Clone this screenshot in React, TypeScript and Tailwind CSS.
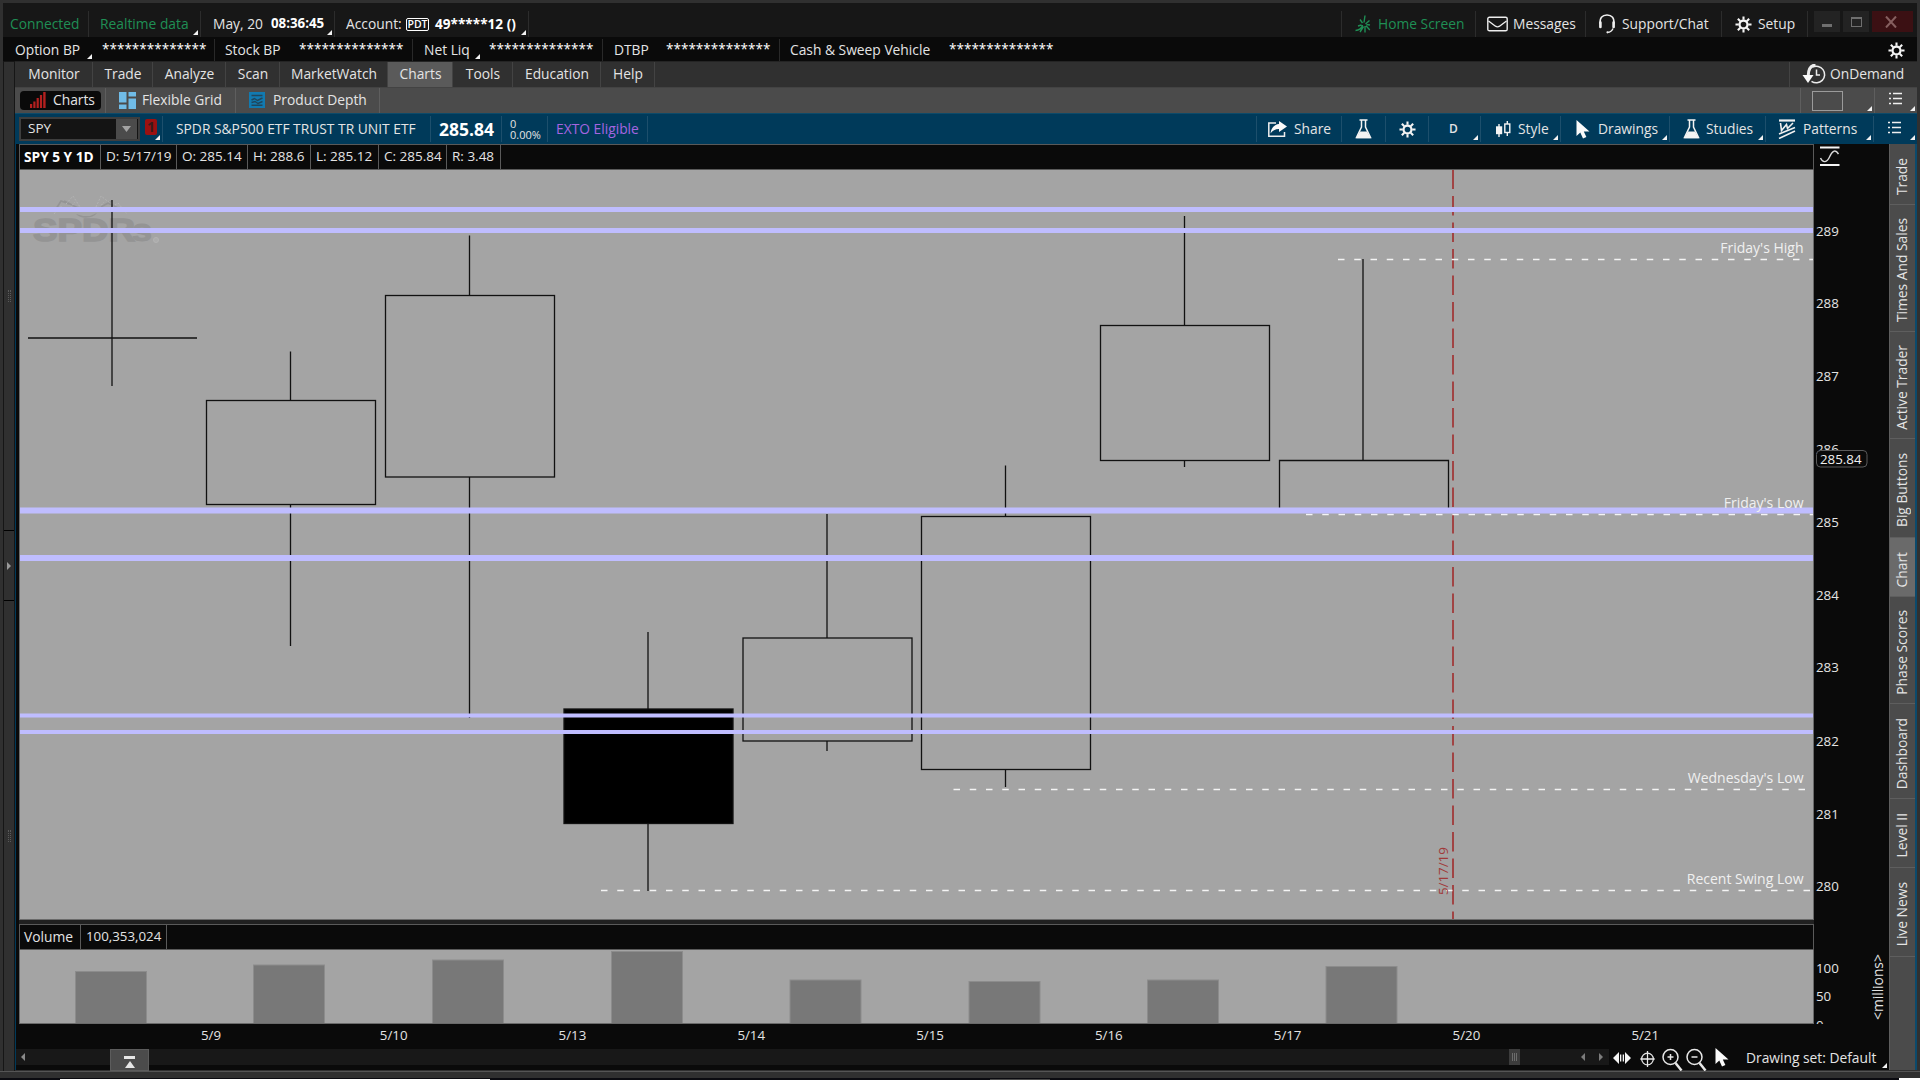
import { ReactNode } from "react";
import clsx from "clsx";

type Candle = {
  x: number;
  high: number;
  top: number;
  bottom: number;
  low: number;
  filled?: boolean;
};

const candles: Candle[] = [
  { x: 290.5, high: 351.5, top: 400.5, bottom: 504.5, low: 646 },
  { x: 469.5, high: 235.5, top: 295.5, bottom: 477, low: 718 },
  { x: 648, high: 632, top: 709, bottom: 823.5, low: 891, filled: true },
  { x: 827, high: 514, top: 638, bottom: 741, low: 751 },
  { x: 1005.5, high: 465.5, top: 516.5, bottom: 769.5, low: 787 },
  { x: 1184.5, high: 216, top: 325.5, bottom: 460.5, low: 467 },
];

// support / resistance bands: center and thickness
const bands = [
  { y: 209.5, h: 5 },
  { y: 230.5, h: 5 },
  { y: 510.5, h: 6 },
  { y: 558, h: 6 },
  { y: 715.5, h: 4 },
  { y: 732, h: 4 },
];

const levels = [
  { label: "Friday's High", x: 1338, y: 259.5 },
  { label: "Friday's Low", x: 1306, y: 514.5 },
  { label: "Wednesday's Low", x: 953.5, y: 789.5 },
  { label: "Recent Swing Low", x: 601, y: 890.5 },
];

const volumeBars = [
  { x: 75.5, y: 971.5 },
  { x: 253.5, y: 965 },
  { x: 432.5, y: 960 },
  { x: 611.5, y: 951.5 },
  { x: 790, y: 980 },
  { x: 969, y: 981.5 },
  { x: 1147.5, y: 980 },
  { x: 1326, y: 966.5 },
];

const prices = [
  { label: "289", y: 230.5 },
  { label: "288", y: 303 },
  { label: "287", y: 376 },
  { label: "286", y: 449 },
  { label: "285", y: 522 },
  { label: "284", y: 595 },
  { label: "283", y: 667.3 },
  { label: "282", y: 741 },
  { label: "281", y: 813.5 },
  { label: "280", y: 886 },
];

const menuTabs = [
  { label: "Monitor", width: "w-[78px]" },
  { label: "Trade", width: "w-[60px]" },
  { label: "Analyze", width: "w-[73px]" },
  { label: "Scan", width: "w-[54px]" },
  { label: "MarketWatch", width: "w-[108px]" },
  { label: "Charts", width: "w-[65px]", active: true },
  { label: "Tools", width: "w-[60px]" },
  { label: "Education", width: "w-[88px]" },
  { label: "Help", width: "w-[54px]" },
];

const ohlc = [
  { label: "D: 5/17/19", width: "w-[76px]" },
  { label: "O: 285.14", width: "w-[71px]" },
  { label: "H: 288.6", width: "w-[63px]" },
  { label: "L: 285.12", width: "w-[68px]" },
  { label: "C: 285.84", width: "w-[68px]" },
  { label: "R: 3.48", width: "w-[54px]" },
];

const sideTabs = [
  { label: "Trade", height: "h-[61px]" },
  { label: "Times And Sales", height: "h-[127px]" },
  { label: "Active Trader", height: "h-[107px]" },
  { label: "Big Buttons", height: "h-[99px]" },
  { label: "Chart", height: "h-[59px]", active: true },
  { label: "Phase Scores", height: "h-[107px]" },
  { label: "Dashboard", height: "h-[95px]" },
  { label: "Level II", height: "h-[69px]" },
  { label: "Live News", height: "h-[89px]" },
];

const dates = ["5/9", "5/10", "5/13", "5/14", "5/15", "5/16", "5/17", "5/20", "5/21"];

function Corner() {
  return (
    <svg className="absolute right-0.5 bottom-0.5" width="5" height="5" viewBox="0 0 5 5">
      <path d="M5 0V5H0Z" fill="#f2f2f2" />
    </svg>
  );
}

function Cell({ className, menu, children }: { className?: string; menu?: boolean; children?: ReactNode }) {
  return (
    <div className={clsx("relative flex shrink-0 items-center border-r", className)}>
      {children}
      {menu && <Corner />}
    </div>
  );
}

function Gear({ size = 17 }: { size?: number }) {
  return (
    <svg width={size} height={size} viewBox="0 0 18 18" fill="none" stroke="#f4f4f4">
      <circle cx="9" cy="9" r="4.2" strokeWidth="2.4" />
      <path
        d="M9 0.5V4M9 14V17.5M0.5 9H4M14 9H17.5M3 3L5.6 5.6M12.4 12.4L15 15M15 3L12.4 5.6M5.6 12.4L3 15"
        strokeWidth="2.2"
      />
    </svg>
  );
}

function Flask() {
  return (
    <svg width="17" height="20" viewBox="0 0 17 20">
      <path d="M4.5 1H12.5M6.5 1V8L1.5 18.5H15.5L10.5 8V1" fill="none" stroke="#f4f4f4" strokeWidth="1.5" />
      <path d="M5 12.5H12L15.8 19.3H1.2Z" fill="#f4f4f4" />
    </svg>
  );
}

function Cursor() {
  return (
    <svg width="14" height="19" viewBox="0 0 14 19">
      <path d="M0.5 0V16L4.3 12.6L7 18.5L10.4 17L7.8 11.4H13.5Z" fill="#fafafa" />
    </svg>
  );
}

function ListIcon() {
  return (
    <svg width="13" height="13" viewBox="0 0 13 13" stroke="#f0f0f0" strokeWidth="1.4">
      <path d="M0 1.5H2M4 1.5H13M0 6.5H2M4 6.5H13M0 11.5H2M4 11.5H13" />
    </svg>
  );
}

function TitleBar() {
  return (
    <div className="flex h-[34px] bg-[#171717] pt-2">
      <Cell className="w-[86px] border-[#2c2c2c] pl-[7px] text-[#1f8f55]">Connected</Cell>
      <Cell className="w-[112px] border-[#2c2c2c] pl-[11px] text-[#1f8f55]" menu>
        Realtime data
      </Cell>
      <Cell className="w-[134px] border-[#2c2c2c] pl-3" menu>
        <span className="w-[58px]">May, 20</span>
        <span className="text-[13.3px] font-bold text-white">08:36:45</span>
      </Cell>
      <Cell className="w-[194px] border-[#2c2c2c] pl-[11px]" menu>
        <span className="w-[60px]">Account:</span>
        <span className="mr-1.5 flex h-[13px] w-[23px] items-center justify-center rounded-xs border border-white text-[10.5px] font-semibold text-white">
          PDT
        </span>
        <span className="text-[13.6px] font-bold text-white">49*****12 ()</span>
      </Cell>
      <Cell className="grow border-[#2c2c2c]" />
      <Cell className="w-[134px] gap-[7px] border-[#2c2c2c] pl-[13px] text-[#1f8f55]">
        <svg width="16" height="18" viewBox="0 0 16 18" fill="none" stroke="#1f8f55" strokeWidth="1.4">
          <path d="M10 0.5L9 7.500M5 4.500L7.500 8M14.500 5.500L10.500 9M0.500 15.500C4 15.500 7 13 7.500 10M5 17L8.500 11.500M10 11V17.500M11 10.800L14.800 15M11.500 9.500L15 10M3 11L6.500 10" />
        </svg>
        Home Screen
      </Cell>
      <Cell className="w-[110px] gap-[5px] border-[#2c2c2c] pl-[11px]">
        <svg width="21" height="16" viewBox="0 0 21 16" fill="none" stroke="#eeeeee" strokeWidth="1.4">
          <rect x="0.8" y="1.2" width="19.4" height="13.6" rx="1.6" />
          <path d="M1.5 5L8.5 10.2C9.8 11.1 11.2 11.1 12.5 10.2L19.5 5" />
        </svg>
        Messages
      </Cell>
      <Cell className="w-[136px] gap-[6px] border-[#2c2c2c] pl-3">
        <svg width="18" height="20" viewBox="0 0 18 20" fill="none" stroke="#f0f0f0">
          <path d="M2.3 10C1.2 4 4.2 1 9 1S16.8 4 15.7 10" strokeWidth="1.5" />
          <path d="M2.4 8.500V13M15.600 8.500V13" strokeWidth="2.600" strokeLinecap="round" />
          <path d="M15 14.5C14 17 12.5 18.2 9.5 18.4" strokeWidth="1.4" />
          <circle cx="9.5" cy="18.3" r="1.1" fill="#f0f0f0" stroke="none" />
        </svg>
        Support/Chat
      </Cell>
      <Cell className="w-[86px] gap-[6px] border-[#2c2c2c] pl-[13px]">
        <Gear />
        Setup
      </Cell>
      <div className="ml-1.5 flex h-[21px] w-[103px] gap-[3px]">
        <div className="flex w-[26px] items-end justify-center bg-[#232323] pb-[5px]">
          <div className="h-[3px] w-[10px] bg-[#6f6f6f]" />
        </div>
        <div className="flex w-[26px] items-center justify-center bg-[#232323]">
          <div className="h-[10px] w-[11px] border border-t-2 border-[#6f6f6f]" />
        </div>
        <div className="flex w-[41px] items-center justify-center bg-[#3b1013] pr-1">
          <svg width="12" height="12" viewBox="0 0 12 12" stroke="#865f5f" strokeWidth="2">
            <path d="M1 0.5L11 11.5M11 0.5L1 11.5" />
          </svg>
        </div>
      </div>
    </div>
  );
}

function BalanceBar() {
  const stars = <span className="text-[13.55px] text-white">**************</span>;
  return (
    <div className="flex h-6 bg-[#0a0a0a] pt-0.5">
      <Cell className="w-[212px] border-[#292929] pl-3">
        <span className="relative h-full w-[79px] leading-[22px]">
          Option BP
          <Corner />
        </span>
        <span className="w-2" />
        {stars}
      </Cell>
      <Cell className="w-[198px] border-[#292929] pl-2.5">
        <span className="w-[74px]">Stock BP</span>
        {stars}
      </Cell>
      <Cell className="w-[190px] border-[#292929] pl-[11px]">
        <span className="relative h-full w-[58px] leading-[22px]">
          Net Liq
          <Corner />
        </span>
        <span className="w-[7px]" />
        {stars}
      </Cell>
      <Cell className="w-[177px] border-[#292929] pl-[11px]">
        <span className="w-[52px]">DTBP</span>
        {stars}
      </Cell>
      <Cell className="grow border-transparent pl-2.5">
        <span className="w-[159px]">Cash &amp; Sweep Vehicle</span>
        {stars}
      </Cell>
      <div className="mr-3 flex items-center">
        <Gear />
      </div>
    </div>
  );
}

function MenuTabs() {
  return (
    <div className="flex h-[27px] border-t border-b border-t-[#242424] border-b-[#434343] bg-[#303030]">
      {menuTabs.map((tab) => (
        <Cell
          key={tab.label}
          className={clsx(tab.width, "justify-center border-[#434343] pb-0.5 pl-px", tab.active && "bg-[#5a5a5a]")}
        >
          {tab.label}
        </Cell>
      ))}
      <Cell className="grow border-[#434343]" />
      <div className="flex w-[127px] items-center gap-1 pb-0.5 pl-3">
        <svg width="24" height="20" viewBox="0 0 24 20" fill="none" stroke="#ececec">
          <path d="M9.5 17.3A8.3 8.3 0 1 0 10.5 3.2" strokeWidth="1.5" />
          <path d="M14.5 5.5V11H18" strokeWidth="1.5" />
          <path d="M13.5 1C8.5 1.3 6.3 5 6.2 12" strokeWidth="3" />
          <path d="M0.5 11H11.5L6 19Z" fill="#fafafa" stroke="none" />
        </svg>
        OnDemand
      </div>
    </div>
  );
}

function SubTabs() {
  return (
    <div className="flex h-[25px] bg-[#4b4b4b]">
      <Cell className="w-[91px] border-[#5e5e5e] pb-px pl-[5px]">
        <div className="flex h-[19px] w-[81px] items-center gap-[7px] rounded bg-[#0a0a0a] pl-2.5">
          <svg width="16" height="16" viewBox="0 0 16 16" fill="#b4201f">
            <path d="M0 12H2.2V16H0ZM3.3 9.5H5.5V16H3.3ZM6.6 6H8.8V16H6.6ZM9.9 3H12.1V16H9.9ZM13.2 0H15.6V16H13.2Z" />
          </svg>
          Charts
        </div>
      </Cell>
      <Cell className="w-[130px] gap-[6px] border-[#5e5e5e] pb-px pl-[13px]">
        <svg width="17" height="17" viewBox="0 0 17 17" fill="#70bce8">
          <path d="M0 0H7.5V10.5H0ZM9.5 0H17V4.5H9.5ZM9.5 6.5H17V17H9.5ZM0 12.5H7.5V17H0Z" />
        </svg>
        Flexible Grid
      </Cell>
      <Cell className="w-[144px] gap-2 border-[#5e5e5e] pb-px pl-[13px]">
        <svg width="16" height="16" viewBox="0 0 16 16" fill="none">
          <rect width="16" height="16" fill="#127ab0" />
          <path d="M2.5 3.5H13.5M2.5 8L5.5 6.5L8.5 8.5L13.5 6M2.5 10.5L6 9.5L9 11.5L13.5 9.5M2.5 13.3H13.5" stroke="#20465c" strokeWidth="1.4" />
        </svg>
        Product Depth
      </Cell>
      <Cell className="grow border-[#5e5e5e]" />
      <Cell className="w-[74px] border-[#5e5e5e] pl-[11px]" menu>
        <div className="h-5 w-[31px] border border-[#9b9b9b]" />
      </Cell>
      <div className="relative flex w-[42px] items-center pb-1 pl-[14px]">
        <ListIcon />
        <Corner />
      </div>
    </div>
  );
}

function SymbolBar() {
  return (
    <div className="flex h-[31px] border-t border-[#0d4a69] bg-[#003a5a] py-0.5">
      <Cell className="w-[148px] border-[#1d4f6c] pl-1" menu>
        <div className="flex h-6 w-[121px] items-center border-2 border-[#3e3e3e] bg-[#141414] pl-[7px]">
          <span className="grow text-[13.5px]">SPY</span>
          <div className="mr-px flex h-5 w-[21px] items-center justify-center bg-[#4b4b4b]">
            <svg width="9" height="6" viewBox="0 0 9 6">
              <path d="M0 0H9L4.5 6Z" fill="#a3a3a3" />
            </svg>
          </div>
        </div>
        <div className="mb-1 ml-[5px] flex h-4 w-3 items-center justify-center rounded-xs bg-[#9a1111] text-[14px] font-bold text-[#3c1a1a]">
          1
        </div>
      </Cell>
      <Cell className="w-[268px] border-[#1d4f6c] pl-[13px]">SPDR S&amp;P500 ETF TRUST TR UNIT ETF</Cell>
      <Cell className="w-[71px] border-[#1d4f6c] pt-px pl-2 text-[17.5px] font-bold text-white">285.84</Cell>
      <Cell className="w-[46px] border-[#1d4f6c] pl-2">
        <div className="text-[11px] leading-[11px]">
          <div>0</div>
          <div>0.00%</div>
        </div>
      </Cell>
      <Cell className="w-[100px] border-[#1d4f6c] pl-2 text-[#a565e0]">EXTO Eligible</Cell>
      <Cell className="grow border-[#1d4f6c]" />
      <Cell className="w-[85px] gap-[7px] border-[#1d4f6c] pl-[11px]">
        <svg width="19" height="17" viewBox="0 0 19 17">
          <path d="M8 2H0.8V15.2H16.5V11" fill="none" stroke="#eeeeee" strokeWidth="1.5" />
          <path d="M11 0L19 5.5L11 11V8C7 8 4.5 9.5 2.5 12.5C3 7.5 6 3.5 11 3Z" fill="#fafafa" />
        </svg>
        Share
      </Cell>
      <Cell className="w-[44px] justify-center border-[#1d4f6c]">
        <Flask />
      </Cell>
      <Cell className="w-[43px] justify-center border-[#1d4f6c]">
        <Gear />
      </Cell>
      <Cell className="w-[52px] border-[#1d4f6c] pl-5 text-[12px] font-semibold" menu>
        D
      </Cell>
      <Cell className="w-20 gap-[7px] border-[#1d4f6c] pl-[15px]" menu>
        <svg width="15" height="17" viewBox="0 0 15 17" stroke="#f4f4f4" strokeWidth="1.4">
          <path d="M3 3V16" />
          <rect x="0.7" y="6" width="4.8" height="6.5" fill="#f4f4f4" />
          <path d="M11.3 0V3M11.3 11.5V15" />
          <rect x="8.8" y="3" width="5" height="8.5" fill="none" />
        </svg>
        Style
      </Cell>
      <Cell className="w-[109px] gap-2 border-[#1d4f6c] pl-[15px]" menu>
        <Cursor />
        Drawings
      </Cell>
      <Cell className="w-[96px] gap-[6px] border-[#1d4f6c] pl-[13px]" menu>
        <Flask />
        Studies
      </Cell>
      <Cell className="w-[108px] gap-[7px] border-[#1d4f6c] pl-3" menu>
        <svg width="18" height="20" viewBox="0 0 18 20" fill="none" stroke="#f0f0f0" strokeWidth="1.6">
          <path d="M1 1.5H17" strokeWidth="2.2" />
          <path d="M2.500 4L3.500 11.500L8.500 5.500L9.500 9.500L15 4" />
          <path d="M1 15L17 8.5M1 19.5L17 12" />
        </svg>
        Patterns
      </Cell>
      <div className="relative flex w-[43px] items-center pb-1 pl-[14px]">
        <ListIcon />
        <Corner />
      </div>
    </div>
  );
}

function PriceChart() {
  return (
    <svg width="1793" height="749" viewBox="20 170 1793 749" className="block bg-[#a4a4a4]">
      {/* fund logo watermark */}
      <g opacity="0.5">
        <path
          d="M56 209L61 201L69 204M64 201L80 209M97 209L112 201M108 203L120 209"
          fill="none"
          stroke="#858585"
          strokeWidth="1.6"
        />
        <path
          d="M54 214L60 206L66 210M66 204L73 196L80 207M70 208L75 202M96 207L101 196L110 203M99 208L104 202M112 207L118 203L127 214"
          fill="none"
          stroke="#c2c2c2"
          strokeWidth="1"
          strokeDasharray="2 1.5"
        />
        <path d="M76 214C80 219 93 219 97 213L90 216H83Z" fill="#858585" />
        <text x="33" y="241" textLength="102" lengthAdjust="spacingAndGlyphs" fontSize="32" fontWeight="bold" fontFamily="Liberation Sans, sans-serif" fill="#858585" stroke="#858585" strokeWidth="1.5">
          SPDR
        </text>
        <text x="132" y="241" textLength="20" lengthAdjust="spacingAndGlyphs" fontSize="32" fontWeight="bold" fontFamily="Liberation Sans, sans-serif" fill="#858585" stroke="#858585" strokeWidth="1">
          s
        </text>
        <circle cx="156" cy="240" r="2.5" fill="#b4b4b4" stroke="#c4c4c4" />
      </g>

      <g stroke="#111111" strokeWidth="1.3" fill="none">
        <path d="M112 200V386M28 338H197" />
        {candles.map((c) => (
          <g key={c.x}>
            <path d={`M${c.x} ${c.high}V${c.top}M${c.x} ${c.bottom}V${c.low}`} />
            <rect x={c.x - 84} y={c.top} width="169" height={c.bottom - c.top} fill={c.filled ? "#000000" : "none"} />
          </g>
        ))}
        <path d="M1363 259V460.5M1279.500 509V460.5H1448.500V509" />
      </g>

      <path d="M1453 169.5V919" stroke="#a03a3a" strokeWidth="1.8" strokeDasharray="19.5 7" />
      {levels.map((l) => (
        <path
          key={l.label}
          d={`M${l.x} ${l.y}H1813`}
          stroke="#f4f4f4"
          strokeWidth="1.6"
          strokeDasharray="6.5 9.75"
        />
      ))}
      {bands.map((b) => (
        <path key={b.y} d={`M20 ${b.y}H1813`} stroke="#bfbdff" strokeWidth={b.h} />
      ))}
      {levels.map((l) => (
        <text key={l.label} x="1803.500" y={l.y - 7} textAnchor="end" fontSize="14" fill="#f0f0f0">
          {l.label}
        </text>
      ))}
      <text transform="translate(1448 895) rotate(-90)" fontSize="13.3" fill="#a03a3a">
        5/17/19
      </text>
    </svg>
  );
}

function VolumeChart() {
  return (
    <svg width="1793" height="73" viewBox="20 950 1793 73" className="block bg-[#a4a4a4]">
      {volumeBars.map((bar) => (
        <rect
          key={bar.x}
          x={bar.x}
          y={bar.y}
          width="71"
          height={1024 - bar.y}
          fill="#787878"
          stroke="#8c8c8c"
          strokeWidth="1"
        />
      ))}
    </svg>
  );
}

function PriceAxis() {
  return (
    <svg width="75" height="880" viewBox="1814 144 75 880" className="block" fill="#e4e4e4" fontSize="13.3">
      <path d="M1820 147.5H1839.5M1820 165H1839.5" stroke="#f4f4f4" strokeWidth="2" />
      <path d="M1820.5 158C1823 163.5 1827 162.5 1829.5 157S1835 148.5 1838.5 154" fill="none" stroke="#d8d8d8" strokeWidth="1.4" />
      {prices.map((p) => (
        <text key={p.label} x="1816" y={p.y + 5}>
          {p.label}
        </text>
      ))}
      <rect x="1816.5" y="450.5" width="50.5" height="16.5" rx="4" fill="#0a0a0a" stroke="#5a5a5a" />
      <text x="1820" y="463.5" fill="#f0f0f0">
        285.84
      </text>
      <text x="1816" y="972.5">100</text>
      <text x="1816" y="1001">50</text>
      <text x="1816" y="1029.5">0</text>
      <text transform="translate(1882.5 1020) rotate(-90)" fontSize="13.8">
        &lt;millions&gt;
      </text>
    </svg>
  );
}

function ChartFooter() {
  return (
    <div className="flex h-[21px]">
      <div className="flex h-4 w-[1593px] items-center bg-[#181818] pl-[5px]">
        <svg width="4" height="8" viewBox="0 0 4 8">
          <path d="M4 0V8L0 4Z" fill="#8a8a8a" />
        </svg>
        <div className="ml-[85px] flex h-[22px] w-[39px] flex-col items-center gap-0.5 self-start border border-[#5c5c5c] bg-[#4b4b4b] pt-1.5">
          <div className="h-[3px] w-[11px] shrink-0 bg-[#e6e6e6]" />
          <svg className="shrink-0" width="10" height="7" viewBox="0 0 10 7">
            <path d="M5 0L10 7H0Z" fill="#e6e6e6" />
          </svg>
        </div>
        <div className="grow" />
        <div className="flex h-4 w-[11px] items-center justify-center gap-px bg-[#3c3c3c]">
          <div className="h-2 w-px bg-[#6c6c6c]" />
          <div className="h-2 w-px bg-[#6c6c6c]" />
          <div className="h-2 w-px bg-[#6c6c6c]" />
        </div>
        <svg className="mr-[6px] ml-[61px]" width="22" height="8" viewBox="0 0 22 8" fill="#7c7c7c">
          <path d="M4 0V8L0 4ZM18 0V8L22 4Z" />
        </svg>
      </div>
      <div className="flex h-[17px] items-center">
        <svg className="ml-1" width="18" height="12" viewBox="0 0 18 14" preserveAspectRatio="none" fill="#f4f4f4">
          <path d="M6 0V14L0 7ZM12 0V14L18 7ZM7 3H8.3V11H7ZM9.7 3H11V11H9.700Z" />
        </svg>
        <svg className="mt-0.5 ml-2" width="17" height="18" viewBox="0 0 17 20" fill="none" stroke="#e8e8e8" strokeWidth="1.4">
          <circle cx="8.5" cy="10" r="6.5" />
          <path d="M8.5 1V19M0.5 10H16.5" />
        </svg>
        <svg className="mt-1 ml-1.5" width="21" height="24" viewBox="0 0 21 24" fill="none" stroke="#e8e8e8" strokeWidth="1.5">
          <circle cx="8.5" cy="9" r="7.5" />
          <path d="M13.5 15L19.5 22.5" strokeWidth="2.5" />
          <path d="M5.5 9H11.5M8.5 6V12" />
        </svg>
        <svg className="mt-1 ml-[3px]" width="21" height="24" viewBox="0 0 21 24" fill="none" stroke="#e8e8e8" strokeWidth="1.5">
          <circle cx="8.5" cy="9" r="7.5" />
          <path d="M13.5 15L19.5 22.5" strokeWidth="2.5" />
          <path d="M5.5 9H11.5" />
        </svg>
        <div className="ml-2">
          <Cursor />
        </div>
      </div>
      <div className="relative flex grow items-center pb-1 pl-[17px]">
        Drawing set: Default
        <Corner />
      </div>
    </div>
  );
}

function SideTabs() {
  return (
    <div className="flex w-[26px] flex-col border-l border-[#5e5e5e] bg-[#4b4b4b] text-[13.8px]">
      {sideTabs.map((tab) => (
        <div
          key={tab.label}
          className={clsx(
            tab.height,
            "flex shrink-0 items-center justify-center border-b border-[#5e5e5e] pt-[5px] pr-0.5",
            tab.active && "bg-[#6a6a6a]"
          )}
        >
          <span className="rotate-180 leading-[20px] [writing-mode:vertical-rl]">{tab.label}</span>
        </div>
      ))}
    </div>
  );
}

function LeftRail() {
  return (
    <div className="flex w-3 flex-col border-x border-t border-[#161616] bg-[#303030]">
      <div className="flex h-[469px] items-center justify-center border-b border-black">
        <div className="h-3 w-[3px] border-x border-dotted border-[#5a5a5a]" />
      </div>
      <div className="flex h-[70px] items-center justify-center border-b border-black">
        <svg width="4" height="8" viewBox="0 0 4 8">
          <path d="M0 0L4 4L0 8Z" fill="#9a9a9a" />
        </svg>
      </div>
      <div className="flex grow items-center justify-center">
        <div className="h-3 w-[3px] border-x border-dotted border-[#5a5a5a]" />
      </div>
    </div>
  );
}

export default function App() {
  return (
    <div className="flex h-[1080px] w-[1920px] flex-col overflow-hidden bg-[#303030] pt-[3px] font-['Open_Sans','Noto_Sans',sans-serif] text-[13.8px] leading-none whitespace-nowrap text-[#e4e4e4]">
      <div className="mx-[3px]">
        <TitleBar />
        <BalanceBar />
      </div>
      <div className="mx-[3px] flex h-[1010px] shrink-0">
        <LeftRail />
        <div className="flex w-[1902px] flex-col">
          <MenuTabs />
          <SubTabs />
          <SymbolBar />
          <div className="flex h-[926px] border-l border-[#003a5a] bg-[#0a0a0a]">
            <div className="flex w-[1873px] flex-col">
              <div className="flex">
                <div className="ml-[3px] w-[1795px]">
                  <div className="flex h-[26px] border border-[#5a5a5a] bg-[#0a0a0a] text-[13.5px]">
                    <Cell className="w-[81px] border-[#5a5a5a] pl-1 text-[13.7px] font-bold text-white">SPY 5 Y 1D</Cell>
                    {ohlc.map((o) => (
                      <Cell key={o.label} className={clsx(o.width, "border-[#5a5a5a] pl-[5px]")}>
                        {o.label}
                      </Cell>
                    ))}
                  </div>
                  <div className="border-x border-b border-[#6a6a6a]">
                    <PriceChart />
                  </div>
                  <div className="h-1 bg-[#202020]" />
                  <div className="flex h-[26px] border border-[#5a5a5a] bg-[#0a0a0a]">
                    <Cell className="w-[61px] border-[#5a5a5a] pl-1">Volume</Cell>
                    <Cell className="w-[86px] border-[#5a5a5a] pl-[5px] text-[13.3px]">100,353,024</Cell>
                  </div>
                  <div className="border-x border-b border-[#6a6a6a]">
                    <VolumeChart />
                  </div>
                </div>
                <PriceAxis />
              </div>
              <div className="flex h-[25px] items-center pb-0.5 pl-[185px] text-[13.3px]">
                {dates.map((d) => (
                  <span key={d} className="w-[178.8px] shrink-0">
                    {d}
                  </span>
                ))}
              </div>
              <ChartFooter />
            </div>
            <SideTabs />
            <div className="w-0.5 bg-[#0b4a6c]" />
          </div>
        </div>
      </div>
      <div className="h-[7px] shrink-0 border-t border-[#555555]" />
      <div className="flex h-[3px] shrink-0 items-end bg-[#0b0b10]">
        <div className="ml-[60px] h-[2px] w-[430px] bg-white" />
        <div className="ml-[500px] h-[2px] w-[60px] bg-[#4a4a4a]" />
        <div className="ml-auto h-[3px] w-[21px] bg-white" />
      </div>
    </div>
  );
}
